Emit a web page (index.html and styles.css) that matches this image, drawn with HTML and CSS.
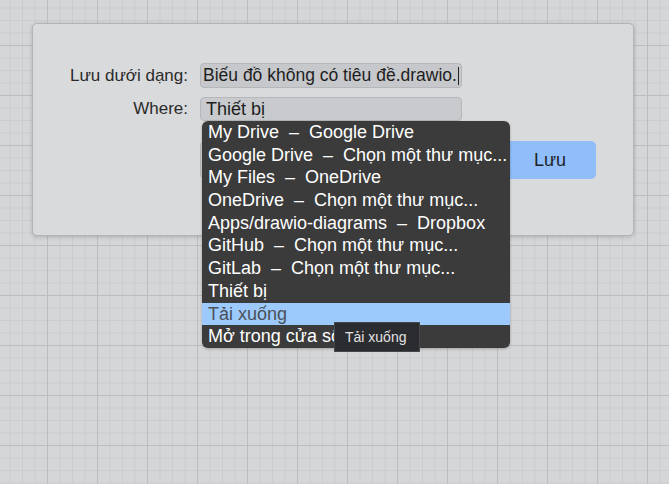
FILE: index.html
```html
<!DOCTYPE html>
<html lang="vi">
<head>
<meta charset="utf-8">
<title>Lưu</title>
<link rel="stylesheet" href="styles.css">
</head>
<body>
<div class="canvas">
  <div class="dialog">
    <div class="form">
      <label class="label">Lưu dưới dạng:</label>
      <div class="field input">Biếu đồ không có tiêu đề.drawio.<span class="caret"></span></div>
      <label class="label">Where:</label>
      <div class="field select">Thiết bị</div>
    </div>
    <div class="buttons">
      <div class="btn cancel"></div>
      <div class="btn save">Lưu</div>
    </div>
    <ul class="menu">
      <li class="item">My Drive&nbsp; –&nbsp; Google Drive</li>
      <li class="item">Google Drive&nbsp; –&nbsp; Chọn một thư mục...</li>
      <li class="item">My Files&nbsp; –&nbsp; OneDrive</li>
      <li class="item">OneDrive&nbsp; –&nbsp; Chọn một thư mục...</li>
      <li class="item">Apps/drawio-diagrams&nbsp; –&nbsp; Dropbox</li>
      <li class="item">GitHub&nbsp; –&nbsp; Chọn một thư mục...</li>
      <li class="item">GitLab&nbsp; –&nbsp; Chọn một thư mục...</li>
      <li class="item">Thiết bị</li>
      <li class="item active">Tải xuống</li>
      <li class="item">Mở trong cửa sổ mới</li>
    </ul>
    <div class="tooltip">Tải xuống</div>
  </div>
</div>
</body>
</html>
```

FILE: styles.css
```css
html, body {
  margin: 0;
  padding: 0;
}
body {
  width: 669px;
  height: 484px;
  overflow: hidden;
  font-family: "Liberation Sans", Arial, sans-serif;
}
.canvas {
  width: 669px;
  height: 484px;
  padding: 23px 0 0 32px;
  box-sizing: border-box;
  background-color: #d5d6d8;
  background-image:
    linear-gradient(to right, #bcbdbf 1px, transparent 1px),
    linear-gradient(to bottom, #bcbdbf 1px, transparent 1px),
    linear-gradient(to right, #cbcccf 1px, transparent 1px),
    linear-gradient(to bottom, #cbcccf 1px, transparent 1px);
  background-size: 50px 50px, 50px 50px, 12.5px 12.5px, 12.5px 12.5px;
  background-position: 47px 45px, 47px 45px, 9.5px 7.5px, 9.5px 7.5px;
}
.dialog {
  position: relative;
  width: 602px;
  height: 213px;
  box-sizing: border-box;
  background: #d9dadc;
  border: 1px solid #b3b4b6;
  border-radius: 5px;
  box-shadow: 0 1px 4px rgba(0,0,0,0.18);
  padding: 39px 0 0 0;
}
.form {
  display: grid;
  grid-template-columns: 155px 262px;
  column-gap: 12px;
  row-gap: 9px;
  align-items: center;
}
.label {
  text-align: right;
  font-size: 17px;
  color: #2a2a2a;
}
.field {
  height: 25px;
  box-sizing: border-box;
  border: 1px solid #b5b7ba;
  border-radius: 4px;
  background: #c6c8cb;
  font-size: 17.5px;
  line-height: 20px;
  color: #1e1e1e;
  padding: 1px 0 0 2px;
  white-space: nowrap;
  overflow: hidden;
}
.select {
  height: 24px;
  padding-left: 5px;
  font-size: 18px;
  background: #c8cacd;
}
.caret {
  display: inline-block;
  width: 1px;
  height: 18px;
  margin-left: 1px;
  background: #222;
  vertical-align: -4px;
}
.buttons {
  display: flex;
  gap: 10px;
  margin: 20px 0 0 167px;
}
.btn {
  height: 38px;
  box-sizing: border-box;
  border-radius: 5px;
  font-size: 18px;
  display: flex;
  align-items: center;
  justify-content: center;
}
.cancel {
  width: 294px;
  border: 1px solid #b8babd;
  background: #d3d4d6;
  color: #333;
}
.save {
  width: 92px;
  background: #8fbefb;
  color: #1f2328;
}
.menu {
  position: absolute;
  left: 169px;
  top: 97px;
  width: 308px;
  height: 227px;
  margin: 0;
  padding: 0;
  list-style: none;
  background: #3b3b3b;
  border-radius: 6px;
  overflow: hidden;
  box-shadow: 0 1px 3px rgba(0,0,0,0.25);
}
.item {
  height: 22.7px;
  line-height: 22.7px;
  padding-left: 6px;
  font-size: 18px;
  color: #ffffff;
  white-space: nowrap;
}
.item.active {
  background: #9dcafc;
  color: #4b5158;
}
.tooltip {
  position: absolute;
  left: 301px;
  top: 298px;
  width: 86px;
  height: 30px;
  box-sizing: border-box;
  background: #2b2c2f;
  border: 1px solid #46474a;
  color: #e2e2e2;
  font-size: 14px;
  padding-left: 10px;
  line-height: 28px;
}
```
